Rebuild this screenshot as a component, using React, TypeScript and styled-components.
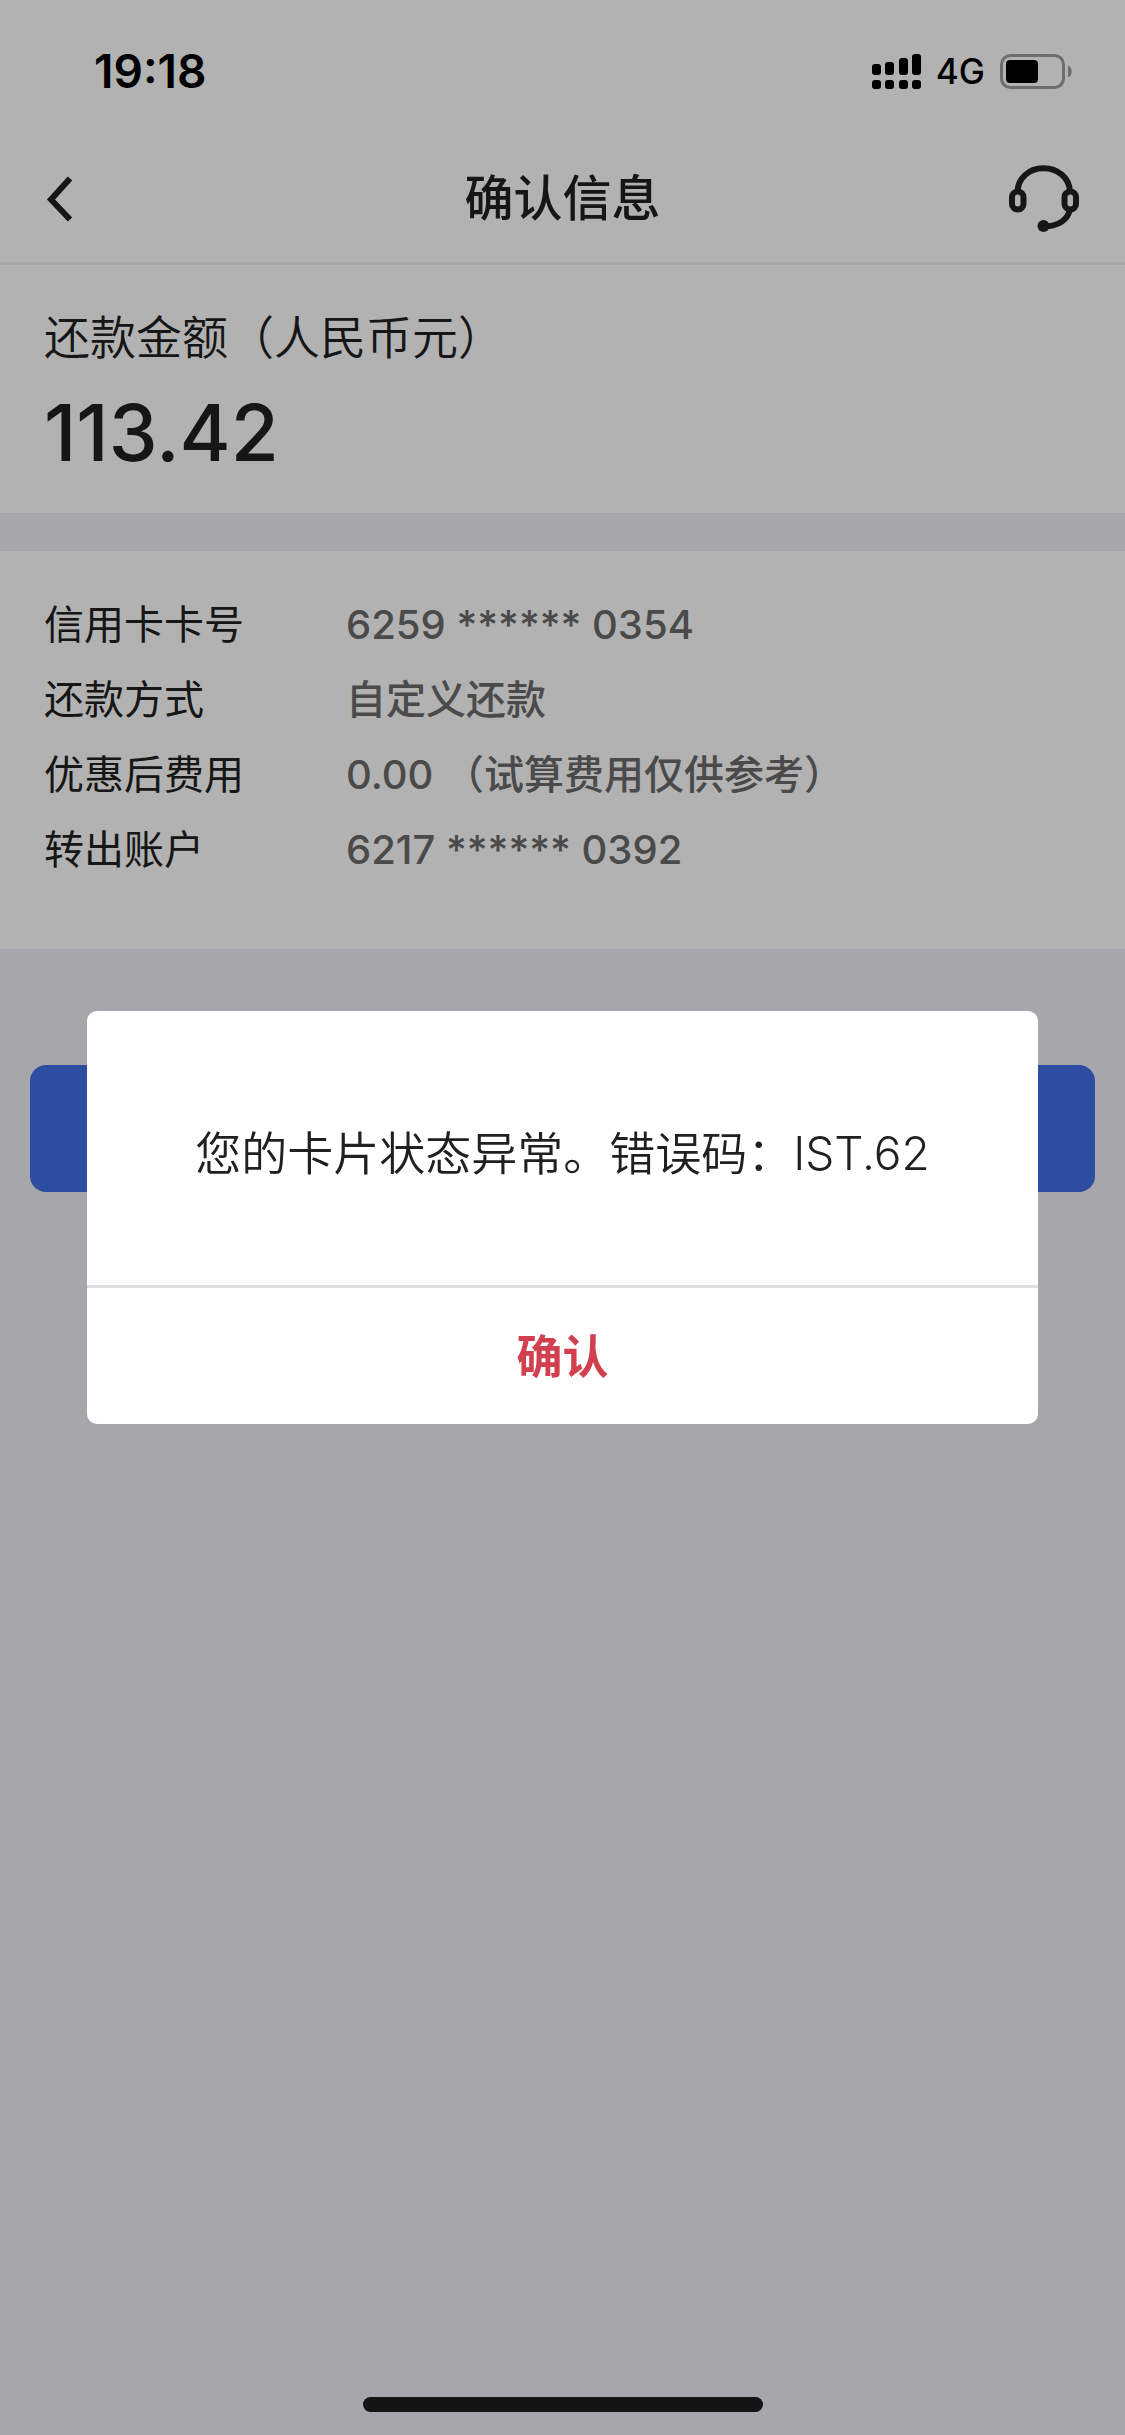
import React from "react";
import styled, { createGlobalStyle } from "styled-components";

const GlobalStyle = createGlobalStyle`
  *, *::before, *::after { box-sizing: border-box; }
  body {
    margin: 0;
    background: #efeef4;
    color: #202020;
    font-family: Inter, "Noto Sans CJK SC", sans-serif;
  }
  button { font: inherit; color: inherit; border: 0; background: none; padding: 0; cursor: pointer; }
`;

const Page = styled.div`
  display: flex;
  flex-direction: column;
  min-height: 100vh;
`;

const TopArea = styled.div`
  background: #fff;
  border-bottom: 3px solid #efefef;
`;

const StatusBar = styled.div`
  display: flex;
  align-items: center;
  justify-content: space-between;
  height: 136px;
  padding: 6px 52px 0 94px;
  color: #000;
`;

const Time = styled.time`
  font-size: 46px;
  line-height: 52px;
  font-weight: 600;
`;

const StatusIcons = styled.div`
  display: flex;
  align-items: center;
  gap: 15px;
`;

const Network = styled.span`
  font-size: 35px;
  line-height: 40px;
  font-weight: 500;
`;

const NavBar = styled.header`
  display: grid;
  grid-template-columns: 96px 1fr 96px;
  align-items: center;
  height: 126px;
  padding: 0 46px;
`;

const NavButton = styled.button<{ $end?: boolean }>`
  display: flex;
  align-items: center;
  justify-content: ${(p) => (p.$end ? "flex-end" : "flex-start")};
  height: 96px;
`;

const Title = styled.h1`
  margin: 0;
  text-align: center;
  font-size: 49px;
  line-height: 64px;
  font-weight: 500;
`;

const Section = styled.section`
  background: #fff;
  padding: 40px 44px;
`;

const AmountSection = styled(Section)`
  margin-bottom: 38px;
`;

const AmountLabel = styled.p`
  margin: 0;
  font-size: 46px;
  line-height: 64px;
  font-weight: 350;
`;

const Amount = styled.p`
  margin: 20px 0 -4px;
  font-size: 78px;
  line-height: 88px;
  font-weight: 500;
`;

const Details = styled.dl`
  margin: 0 0 22px;
  display: grid;
  grid-template-columns: 302px 1fr;
  grid-auto-rows: 75px;
  align-items: center;
  font-size: 40px;
  line-height: 56px;
`;

const Term = styled.dt`
  font-weight: 400;
`;

const Value = styled.dd`
  margin: 0;
  color: #6a6a6a;
  font-weight: 500;
  white-space: pre;
`;

const DetailSection = styled(Section)`
  padding-top: 36px;
`;

const Actions = styled.div`
  padding: 116px 30px 0;
`;

const SubmitButton = styled.button`
  display: block;
  width: 100%;
  height: 127px;
  border-radius: 16px;
  background: #406fe6;
`;

const HomeIndicator = styled.div`
  width: 400px;
  height: 15px;
  margin: auto auto 23px;
  border-radius: 8px;
  background: #1d1d1d;
`;

const Overlay = styled.div`
  position: fixed;
  inset: 0;
  display: flex;
  align-items: center;
  justify-content: center;
  padding: 0 87px;
  background: rgba(0, 0, 0, 0.3);
`;

const Dialog = styled.div`
  flex: 1;
  overflow: hidden;
  border-radius: 10px;
  background: #fff;
`;

const Message = styled.p`
  margin: 0;
  padding: 110px 40px 100px;
  text-align: center;
  font-size: 46px;
  line-height: 64px;
  font-weight: 350;
`;

const ConfirmButton = styled.button`
  display: block;
  width: 100%;
  height: 139px;
  border-top: 3px solid #dedede;
  color: #d23f4e;
  font-size: 46px;
  line-height: 64px;
  font-weight: 700;
`;

const details = [
  { label: "信用卡卡号", value: "6259 ****** 0354" },
  { label: "还款方式", value: "自定义还款" },
  { label: "优惠后费用", value: "0.00 （试算费用仅供参考）" },
  { label: "转出账户", value: "6217 ****** 0392" },
];

const signalBars = [
  { x: 0, top: 10 },
  { x: 13, top: 8 },
  { x: 27, top: 4 },
  { x: 40, top: 0 },
];

function SignalIcon() {
  return (
    <svg width="49" height="35" viewBox="0 0 49 35" aria-hidden="true">
      {signalBars.map(({ x, top }) => (
        <g key={x}>
          <rect x={x} y={top} width="9" height={21 - top} rx="3" />
          <rect x={x} y="26" width="9" height="9" rx="3" />
        </g>
      ))}
    </svg>
  );
}

function BatteryIcon() {
  return (
    <svg width="73" height="35" viewBox="0 0 73 35" aria-hidden="true">
      <rect x="1.5" y="1.5" width="62" height="32" rx="9" fill="none" stroke="#9c9c9c" strokeWidth="3" />
      <rect x="6" y="6" width="32" height="23" rx="4" />
      <path d="M68 11.500c5 2 5 10 0 12z" fill="#9c9c9c" />
    </svg>
  );
}

function BackIcon() {
  return (
    <svg width="28" height="46" viewBox="0 0 28 46" fill="none" aria-hidden="true">
      <path d="M24 2.500 5 23.500l19 20" stroke="#202020" strokeWidth="6" />
    </svg>
  );
}

function HeadsetIcon() {
  return (
    <svg width="70" height="68" viewBox="0 0 70 68" fill="none" stroke="#202020" strokeWidth="6" aria-hidden="true">
      <path d="M8.500 27C9 13 20 3.200 34.500 3.200S60.500 13 61 27" />
      <rect x="3" y="26.500" width="11.500" height="18" rx="5.700" />
      <rect x="55.500" y="26.500" width="11.500" height="18" rx="5.700" />
      <path d="M61 44C59 55 49 61.500 35 61.500" />
      <circle cx="34.500" cy="61" r="6" fill="#202020" stroke="none" />
    </svg>
  );
}

export default function App() {
  return (
    <>
      <GlobalStyle />
      <Page>
        <TopArea>
          <StatusBar>
            <Time>19:18</Time>
            <StatusIcons>
              <SignalIcon />
              <Network>4G</Network>
              <BatteryIcon />
            </StatusIcons>
          </StatusBar>
          <NavBar>
            <NavButton type="button" aria-label="返回">
              <BackIcon />
            </NavButton>
            <Title>确认信息</Title>
            <NavButton type="button" aria-label="客服" $end>
              <HeadsetIcon />
            </NavButton>
          </NavBar>
        </TopArea>
        <main>
          <AmountSection>
            <AmountLabel>还款金额（人民币元）</AmountLabel>
            <Amount>113.42</Amount>
          </AmountSection>
          <DetailSection>
            <Details>
              {details.map(({ label, value }) => (
                <React.Fragment key={label}>
                  <Term>{label}</Term>
                  <Value>{value}</Value>
                </React.Fragment>
              ))}
            </Details>
          </DetailSection>
          <Actions>
            <SubmitButton type="button" aria-label="确认还款" />
          </Actions>
        </main>
        <HomeIndicator />
      </Page>
      <Overlay>
        <Dialog role="alertdialog" aria-modal="true" aria-describedby="dialog-message">
          <Message id="dialog-message">您的卡片状态异常。错误码：IST.62</Message>
          <ConfirmButton type="button">确认</ConfirmButton>
        </Dialog>
      </Overlay>
    </>
  );
}
